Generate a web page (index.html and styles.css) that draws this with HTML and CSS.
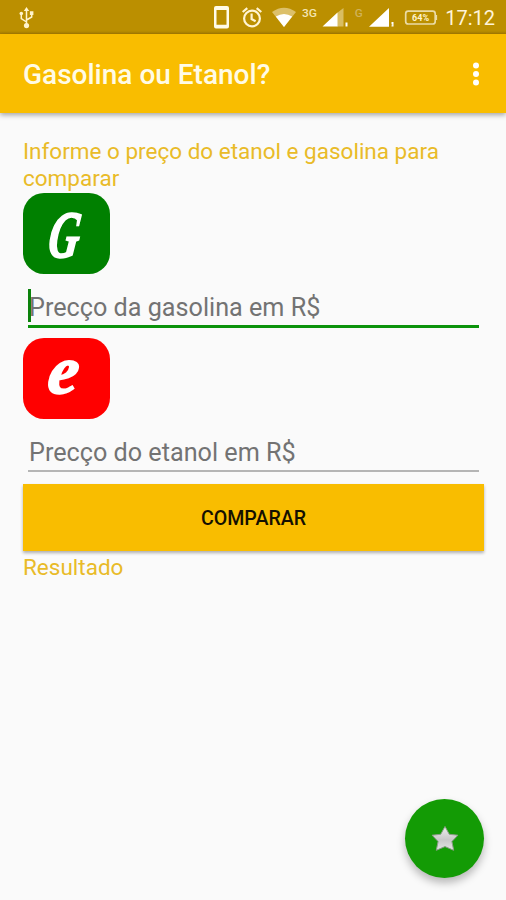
FILE: index.html
```html
<!DOCTYPE html>
<html lang="pt-BR">
<head>
<meta charset="utf-8">
<title>Gasolina ou Etanol?</title>
<link rel="stylesheet" href="styles.css">
</head>
<body>
<div class="screen">
  <header class="status">
    <svg class="usb" width="16" height="22" viewBox="0 0 16 22">
      <path d="M7.5 18V3M7.5 15L2.3 11.5V7M7.5 13L12.7 10V6" fill="none" stroke="#fff4cd" stroke-width="1.5"/>
      <path d="M7.5 0L10.2 4H4.8ZM10.9 4.3H14.4V7.9H10.9Z" fill="#fff4cd"/>
      <circle cx="2.3" cy="6.5" r="1.8" fill="#fff4cd"/><circle cx="7.5" cy="18.6" r="2.6" fill="#fff4cd"/>
    </svg>
    <svg class="icons" width="226" height="34" viewBox="212 0 226 34">
      <path fill="#fffbe8" fill-rule="evenodd" d="M216 6H227Q229 6 229 8V26.500Q229 28.500 227 28.500H216Q214 28.500 214 26.500V8Q214 6 216 6ZM216.500 10V24.800H226.500V10Z"/>
      <g fill="none" stroke="#fff4d2" stroke-width="2.200">
        <circle cx="252" cy="18.500" r="7.900"/>
        <path d="M251.600 13.500V19L255.600 21.300M242.700 12L247.300 8.200M256.700 8.200L261.300 12"/>
      </g>
      <path fill="#dcc06a" d="M272 12Q284 3.500 296 12L284 27Z"/>
      <path fill="#fff" d="M275.800 16.500Q284 11.500 292.200 16.500L284 27Z"/>
      <path fill="#d9bd62" d="M337 13L343.500 8V26.500H337Z"/>
      <path fill="#fff" d="M322.500 26.500L337.500 12.500V26.500ZM345.500 22.500H347.500V26.500H345.500Z"/>
      <path fill="#fff" d="M369 26.800L389 8V26.800ZM391.500 22H393.500V26.500H391.500V25.300H392.300V24.500H391.500Z"/>
      <rect x="405.700" y="11.200" width="29.500" height="12.800" rx="2.500" fill="none" stroke="#eadba6" stroke-width="1.700"/>
      <path d="M436.300 15V20" stroke="#eadba6" stroke-width="1.600"/>
      <text class="net" x="302" y="17.200" fill="#f3e5b2" textLength="15" lengthAdjust="spacingAndGlyphs">3G</text>
      <text class="net" x="354.700" y="17.200" fill="#d0b35b" textLength="8" lengthAdjust="spacingAndGlyphs">G</text>
      <text class="pct" x="420.600" y="21" text-anchor="middle">64%</text>
    </svg>
    <span class="clock">17:12</span>
  </header>
  <div class="appbar">
    <h1>Gasolina ou Etanol?</h1>
    <svg width="8" height="24" viewBox="0 0 8 24" fill="#fff"><circle cx="4" cy="3.500" r="3"/><circle cx="4" cy="12" r="3"/><circle cx="4" cy="20.500" r="3"/></svg>
  </div>
  <main>
    <p class="intro">Informe o preço do etanol e gasolina para comparar</p>
    <div class="logo gas"><span>G</span></div>
    <div class="field active"><i class="caret"></i><span>Precço da gasolina em R$</span></div>
    <div class="logo eta"><span>e</span></div>
    <div class="field"><span>Precço do etanol em R$</span></div>
    <button>COMPARAR</button>
    <p class="result">Resultado</p>
  </main>
  <div class="fab">
    <svg width="30" height="30" viewBox="0 0 30 30">
      <defs><linearGradient id="silver" x1="0" y1="0" x2="0" y2="1"><stop offset="0" stop-color="#eee"/><stop offset=".55" stop-color="#c9c9c9"/><stop offset="1" stop-color="#e4e4e4"/></linearGradient></defs>
      <path d="M15 2.500L19.300 10.300L27.900 11.200L21.900 17.500L23.700 26.300L15 22.600L6.300 26.300L8.100 17.500L2.100 11.200L10.700 10.300Z" fill="url(#silver)" stroke="#8b9c88" stroke-width="1" stroke-linejoin="round"/>
    </svg>
  </div>
</div>
</body>
</html>
```
FILE: styles.css
```css
* { box-sizing: border-box; }
body { margin: 0; font-family: Roboto, "Liberation Sans", sans-serif; }
.screen { position: relative; width: 506px; height: 900px; background: #fafafa; overflow: hidden; }
.status {
  height: 34px; display: flex; align-items: center; padding: 0 11px 0 19px;
  background: linear-gradient(#bb8f00 31px, #a67c00 34px);
}
.usb { margin-top: 1px; }
.icons { margin-left: 177px; flex: none; }
.net { font: 500 10.5px Roboto, sans-serif; }
.pct { font: 700 9px Roboto, sans-serif; fill: #fff4cd; }
.clock { margin-left: auto; padding-top: 2px; font-size: 20px; line-height: 24px; color: #fff4d8; white-space: nowrap; }
.appbar {
  height: 79px; display: flex; align-items: center; justify-content: space-between;
  padding: 0 26px 0 23px; background: #f9bd00; box-shadow: 0 2px 5px rgba(0,0,0,.35);
}
h1 { margin: 2px 0 0; font-size: 28px; font-weight: 500; line-height: 34px; color: #fffbe6; white-space: nowrap; }
main { display: flex; flex-direction: column; padding: 25px 22px 0 23px; }
p { margin: 0; font-size: 22.5px; line-height: 26.5px; color: #e9bb28; }
.intro { height: 55px; }
.logo {
  width: 87px; height: 81px; border-radius: 21px; color: #fff;
  display: flex; align-items: center; justify-content: center;
  font-family: "Liberation Serif", serif; font-style: italic; font-weight: 700;
}
.gas { background: #008000; font-size: 66px; }
.eta { background: #f00; font-size: 68px; }
.logo span { line-height: 60px; -webkit-text-stroke: 2px #fff; }
.gas span { transform: translate(-2px, 1px) skewX(-8deg) scaleX(.64); }
.eta span { transform: translate(-2px, -9px) skewX(-7deg); }
.field {
  position: relative; height: 54px; margin: 0 5px 10px; padding: 19px 0 0 1px;
  font-size: 25.2px; line-height: 30px; color: #737373; white-space: nowrap;
  border-bottom: 3px solid #0b930b;
}
.field:not(.active) { height: 53px; margin-bottom: 12px; border-bottom: 2px solid #b5b5b5; }
.caret { position: absolute; left: 0; top: 15px; width: 3px; height: 33px; background: #0b820b; }
button {
  height: 67px; border: 0; padding: 2px 0 0; background: #f9bd00; color: #151000;
  font: 500 19.6px Roboto, sans-serif; box-shadow: 0 2px 3px rgba(0,0,0,.3);
}
.result { margin-top: 3px; }
.fab {
  position: absolute; left: 405px; top: 799px; width: 79px; height: 79px; border-radius: 50%;
  background: #139b05; display: flex; align-items: center; justify-content: center;
  box-shadow: 0 5px 9px rgba(0,0,0,.27);
}
```
